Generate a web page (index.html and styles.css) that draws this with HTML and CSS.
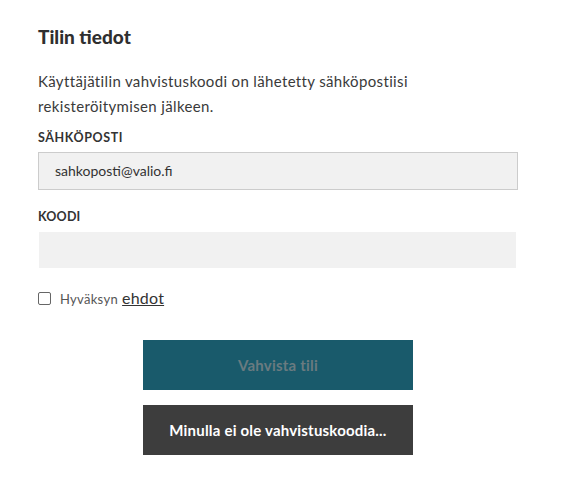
FILE: index.html
```html
<!DOCTYPE html>
<html lang="fi">
<head>
<meta charset="utf-8">
<link rel="stylesheet" href="styles.css">
</head>
<body>
<main class="form">
  <h1 class="title">Tilin tiedot</h1>
  <p class="intro">Käyttäjätilin vahvistuskoodi on lähetetty sähköpostiisi rekisteröitymisen jälkeen.</p>
  <label class="label">SÄHKÖPOSTI</label>
  <div class="input input-email">sahkoposti@valio.fi</div>
  <label class="label label-code">KOODI</label>
  <div class="input input-code"></div>
  <div class="terms">
    <span class="checkbox"></span><span class="terms-text">Hyväksyn</span> <a class="terms-link">ehdot</a>
  </div>
  <div class="actions">
    <button class="btn btn-primary">Vahvista tili</button>
    <button class="btn btn-dark">Minulla ei ole vahvistuskoodia...</button>
  </div>
</main>
</body>
</html>
```

FILE: styles.css
```css
html, body {
  margin: 0;
  padding: 0;
  background: #ffffff;
}
body {
  font-family: Lato, "Liberation Sans", sans-serif;
  color: #333333;
}
.form {
  width: 480px;
  padding: 26px 0 0 38px;
  display: flex;
  flex-direction: column;
}
.title {
  margin: 0;
  font-size: 19px;
  font-weight: 900;
  line-height: 22px;
  color: #2f2f2f;
}
.intro {
  margin: 21px 0 0;
  font-size: 15px;
  letter-spacing: 0.35px;
  line-height: 25px;
  color: #3a3a3a;
  width: 420px;
}
.label {
  display: block;
  margin-top: 12px;
  font-size: 12.5px;
  letter-spacing: 0.6px;
  font-weight: 700;
  line-height: 14px;
  color: #333;
}
.label-code {
  margin-top: 20px;
  letter-spacing: 0.2px;
}
.input {
  margin-top: 7px;
  box-sizing: border-box;
  background: #f1f1f1;
  font-size: 14px;
  color: #333;
}
.input-email {
  height: 38px;
  width: 480px;
  border: 1px solid #cccccc;
  padding: 0 0 0 16px;
  line-height: 36px;
}
.input-code {
  margin-top: 8px;
  margin-left: 1px;
  width: 477px;
  height: 36px;
}
.terms {
  margin-top: 20px;
  line-height: 20px;
  height: 20px;
}
.checkbox {
  display: inline-block;
  box-sizing: border-box;
  width: 13px;
  height: 13px;
  border: 1px solid #666;
  border-radius: 2px;
  background: #fff;
  margin-right: 9px;
  vertical-align: -1px;
}
.terms-text {
  font-size: 13px;
  letter-spacing: 0.3px;
  color: #555;
}
.terms-link {
  font-size: 16px;
  letter-spacing: 0.2px;
  color: #333;
  text-decoration: underline;
}
.actions {
  margin-top: 32px;
  margin-left: 105px;
  display: flex;
  flex-direction: column;
  gap: 15px;
}
.btn {
  width: 270px;
  height: 50px;
  border: 0;
  padding: 0;
  font-family: Lato, "Liberation Sans", sans-serif;
  font-size: 15px;
  letter-spacing: 0.2px;
  font-weight: 700;
  cursor: pointer;
}
.btn-primary {
  background: #195a6b;
  color: #6a7b80;
}
.btn-dark {
  background: #3d3d3d;
  color: #ffffff;
}
```
